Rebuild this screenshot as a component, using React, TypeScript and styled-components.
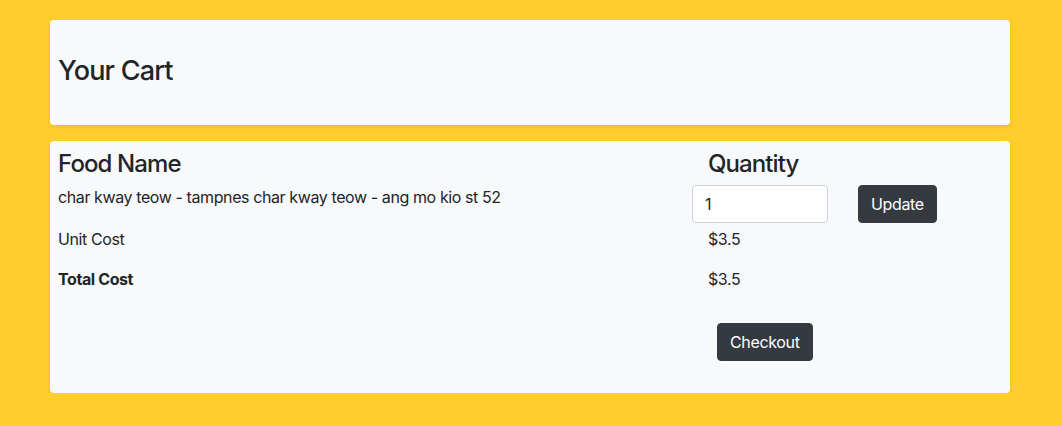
import styled, { createGlobalStyle } from "styled-components";

const GlobalStyle = createGlobalStyle`
  body {
    margin: 0;
    background: #ffcd2c;
    font-family: Inter, "Noto Sans", sans-serif;
    color: #212529;
    font-size: 16px;
    line-height: 1.5;
    letter-spacing: -0.4px;
  }
`;

const Page = styled.div`
  width: 960px;
  margin: 20px 0 0 50px;
  display: flex;
  flex-direction: column;
  gap: 16px;
`;

const Card = styled.div<{ pad: string }>`
  background: #f8f9fa;
  border-radius: 4px;
  box-shadow: 0 2px 4px rgba(0, 0, 0, 0.075);
  padding: ${(p) => p.pad};
`;

const Title = styled.h3`
  margin: 0;
  font-size: 27px;
  font-weight: 500;
  line-height: 1.2;
  letter-spacing: -0.8px;
`;

const Row = styled.div<{ gapBelow?: number }>`
  display: grid;
  grid-template-columns: 634px 1fr;
  align-items: start;
  margin-bottom: ${(p) => p.gapBelow ?? 0}px;
`;

const Cell = styled.div<{ indent?: boolean; bold?: boolean }>`
  padding-left: ${(p) => (p.indent ? "16px" : "0")};
  font-weight: ${(p) => (p.bold ? 700 : 400)};
  line-height: 24px;
`;

const Heading = styled.h4`
  margin: 0;
  font-size: 24px;
  font-weight: 500;
  line-height: 1.2;
  letter-spacing: -0.9px;
`;

const QtyForm = styled.div`
  display: flex;
  gap: 30px;
  align-items: center;
`;

const QtyInput = styled.input`
  box-sizing: border-box;
  width: 136px;
  height: 38px;
  padding: 6px 12px;
  font: inherit;
  color: #212529;
  background: #fff;
  border: 1px solid #ced4da;
  border-radius: 4px;
  outline: none;
`;

const DarkButton = styled.button<{ shift?: number }>`
  box-sizing: border-box;
  height: 38px;
  padding: 6px 12px;
  margin-left: ${(p) => p.shift ?? 0}px;
  font: inherit;
  letter-spacing: -0.35px;
  color: #fff;
  background: #343a40;
  border: 1px solid #343a40;
  border-radius: 4px;
  cursor: pointer;
`;

export default function App() {
  return (
    <>
      <GlobalStyle />
      <Page>
        <Card pad="35px 8px 38px">
          <Title>Your Cart</Title>
        </Card>
        <Card pad="9px 8px 32px">
          <Row gapBelow={6}>
            <Cell>
              <Heading>Food Name</Heading>
            </Cell>
            <Cell indent>
              <Heading>Quantity</Heading>
            </Cell>
          </Row>
          <Row gapBelow={4}>
            <Cell>char kway teow - tampnes char kway teow - ang mo kio st 52</Cell>
            <Cell>
              <QtyForm>
                <QtyInput type="number" defaultValue={1} />
                <DarkButton>Update</DarkButton>
              </QtyForm>
            </Cell>
          </Row>
          <Row gapBelow={16}>
            <Cell>Unit Cost</Cell>
            <Cell indent>$3.5</Cell>
          </Row>
          <Row gapBelow={32}>
            <Cell bold>Total Cost</Cell>
            <Cell indent>$3.5</Cell>
          </Row>
          <Row>
            <Cell />
            <Cell>
              <DarkButton shift={25}>Checkout</DarkButton>
            </Cell>
          </Row>
        </Card>
      </Page>
    </>
  );
}
